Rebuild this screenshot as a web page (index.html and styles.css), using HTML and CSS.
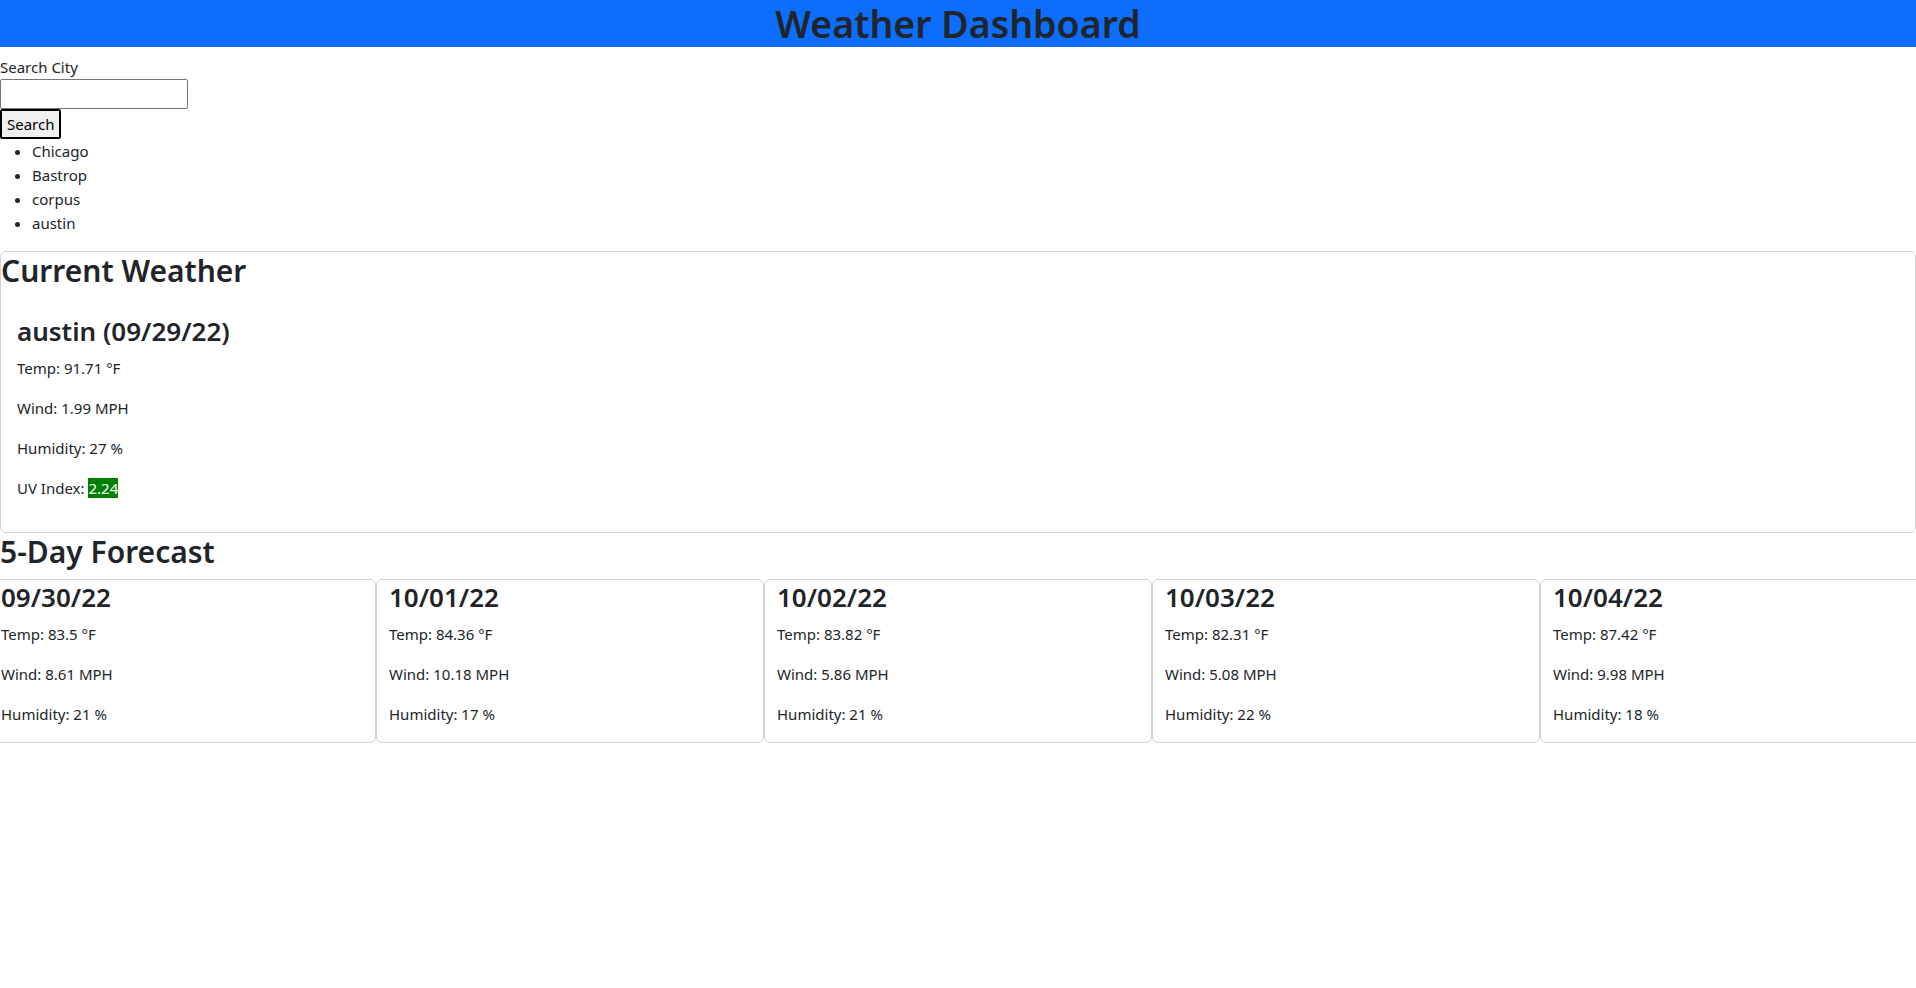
FILE: index.html
```html
<!DOCTYPE html>
<html lang="en">
<head>
<meta charset="utf-8">
<title>Weather Dashboard</title>
<link rel="stylesheet" href="styles.css">
</head>
<body>
<header class="top-bar">
  <h1 class="title">Weather Dashboard</h1>
</header>
<main>
  <section class="search">
    <label class="search-label" for="city">Search City</label>
    <input class="search-input" id="city" type="text">
    <button class="search-btn" type="button">Search</button>
    <ul class="history">
      <li>Chicago</li>
      <li>Bastrop</li>
      <li>corpus</li>
      <li>austin</li>
    </ul>
  </section>

  <section class="card current">
    <h2 class="section-title">Current Weather</h2>
    <div class="card-body">
      <h3 class="city">austin (09/29/22)</h3>
      <p>Temp: 91.71 °F</p>
      <p>Wind: 1.99 MPH</p>
      <p>Humidity: 27 %</p>
      <p>UV Index: <span class="uv">2.24</span></p>
    </div>
  </section>

  <section class="forecast">
    <h2 class="section-title">5-Day Forecast</h2>
    <div class="forecast-row">
      <div class="card day">
        <h3 class="date">09/30/22</h3>
        <p>Temp: 83.5 °F</p>
        <p>Wind: 8.61 MPH</p>
        <p>Humidity: 21 %</p>
      </div>
      <div class="card day">
        <h3 class="date">10/01/22</h3>
        <p>Temp: 84.36 °F</p>
        <p>Wind: 10.18 MPH</p>
        <p>Humidity: 17 %</p>
      </div>
      <div class="card day">
        <h3 class="date">10/02/22</h3>
        <p>Temp: 83.82 °F</p>
        <p>Wind: 5.86 MPH</p>
        <p>Humidity: 21 %</p>
      </div>
      <div class="card day">
        <h3 class="date">10/03/22</h3>
        <p>Temp: 82.31 °F</p>
        <p>Wind: 5.08 MPH</p>
        <p>Humidity: 22 %</p>
      </div>
      <div class="card day">
        <h3 class="date">10/04/22</h3>
        <p>Temp: 87.42 °F</p>
        <p>Wind: 9.98 MPH</p>
        <p>Humidity: 18 %</p>
      </div>
    </div>
  </section>
</main>
</body>
</html>
```

FILE: styles.css
```css
html {
  overflow-x: hidden;
}
body {
  margin: 0;
  font-family: "Noto Sans", "Open Sans", sans-serif;
  font-size: 15px;
  line-height: 24px;
  color: #212529;
  background: #fff;
  overflow-x: hidden;
}
h1, h2, h3 {
  margin: 0 0 8px 0;
  font-weight: 600;
}
p {
  margin: 0 0 16px 0;
}

.top-bar {
  background: #0d6efd;
  margin-bottom: 8px;
}
.title {
  margin: 0;
  font-size: 37.5px;
  line-height: 47px;
  text-align: center;
  color: #212529;
}

.search-label {
  display: block;
}
.search-input {
  display: block;
  box-sizing: border-box;
  width: 188px;
  height: 30px;
  margin: 0;
  padding: 1px 2px;
  border: 1px solid #767676;
  border-radius: 2px;
  font: inherit;
}
.search-btn {
  display: block;
  box-sizing: border-box;
  height: 30px;
  margin: 0;
  padding: 1px 5px;
  border: 2px solid #000;
  border-radius: 2px;
  background: #efefef;
  color: #000;
  font: inherit;
  line-height: 24px;
}
.history {
  margin: 0 0 16px 0;
  padding-left: 32px;
}

.card {
  border: 1px solid rgba(0, 0, 0, 0.175);
  border-radius: 6px;
}
.section-title {
  font-size: 30px;
  line-height: 38px;
}
.card-body {
  padding: 16px;
}
.city, .date {
  font-size: 26px;
  line-height: 34px;
}
.uv {
  background: #008000;
  color: #fff;
}

.forecast-row {
  display: flex;
  margin: 0 -12px;
}
.day {
  flex: 1 1 0;
  min-width: 0;
  padding: 0 12px;
}
```
